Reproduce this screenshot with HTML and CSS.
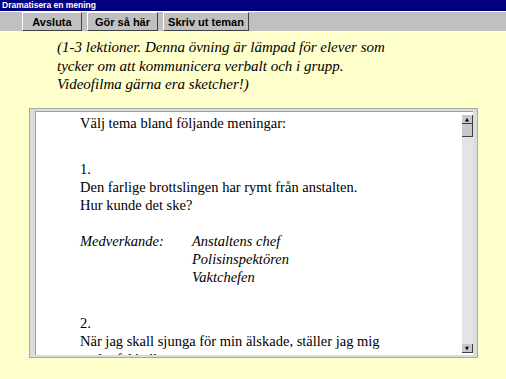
FILE: index.html
```html
<!DOCTYPE html>
<html lang="sv">
<head>
    <meta charset="UTF-8">
    <title>Dramatisera en mening</title>
    <link rel="stylesheet" href="styles.css">
</head>
<body>
    <div class="titlebar">Dramatisera en mening</div>

    <div class="toolbar">
        <button class="tool-btn btn-quit">Avsluta</button>
        <button class="tool-btn btn-help">Gör så här</button>
        <button class="tool-btn btn-print">Skriv ut teman</button>
    </div>

    <p class="intro">(1-3 lektioner. Denna övning är lämpad för elever som<br>
        tycker om att kommunicera verbalt och i grupp.<br>
        Videofilma gärna era sketcher!)</p>

    <div class="viewer">
        <div class="viewer-text">
            <p class="lead">Välj tema bland följande meningar:</p>

            <div class="theme">
                <p>1.<br>
                    Den farlige brottslingen har rymt från anstalten.<br>
                    Hur kunde det ske?</p>
                <div class="cast">
                    <span class="cast-label">Medverkande:</span>
                    <span class="cast-list">Anstaltens chef<br>Polisinspektören<br>Vaktchefen</span>
                </div>
            </div>

            <div class="theme">
                <p>2.<br>
                    När jag skall sjunga för min älskade, ställer jag mig<br>
                    under fel balkong.</p>
            </div>
        </div>
        <div class="scrollbar">
            <div class="scroll-btn">&#9650;</div>
            <div class="scroll-thumb"></div>
            <div class="scroll-track"></div>
            <div class="scroll-btn">&#9660;</div>
        </div>
    </div>
</body>
</html>
```

FILE: styles.css
```css
body {
    margin: 0;
    width: 506px;
    height: 379px;
    overflow: hidden;
    background-color: #ffffcc;
    font-family: "Liberation Serif", "Times New Roman", serif;
}

.titlebar {
    height: 11px;
    background-color: #000080;
    color: white;
    font-family: "Liberation Sans", Arial, sans-serif;
    font-weight: bold;
    font-size: 8.5px;
    line-height: 11px;
    padding-left: 2px;
}

.toolbar {
    display: flex;
    height: 19px;
    padding-left: 22px;
    background-color: #c0c0c0;
    border-top: 1px solid #ffffff;
}

.tool-btn {
    height: 19px;
    margin: 0 5px 0 0;
    padding: 0;
    background-color: #c0c0c0;
    border: 1px solid;
    border-color: #ffffff #404040 #404040 #ffffff;
    font-family: "Liberation Sans", Arial, sans-serif;
    font-weight: bold;
    font-size: 11px;
    color: #000;
}

.btn-quit { width: 60px; }
.btn-help { width: 71px; }
.btn-print { width: 86px; }

.intro {
    margin: 7px 0 0 57px;
    font-style: italic;
    font-size: 15px;
    line-height: 18.5px;
}

.viewer {
    display: flex;
    height: 244px;
    margin: 14px 28px 0 29px;
    background-color: #ffffff;
    border: 3px solid #dcdcdc;
    border-left-width: 6px;
    border-right-width: 5px;
    box-shadow: inset 1px 1px 0 #a0a0a0;
    outline: 1px solid #a8a8a8;
    outline-offset: -1px;
}

.viewer-text {
    flex: 1;
    overflow: hidden;
    padding: 3px 0 0 45px;
    font-size: 14.5px;
    line-height: 18px;
    color: #000;
}

.viewer-text p {
    margin: 0;
}

.theme {
    margin-top: 28px;
}

.cast {
    display: flex;
    margin-top: 18px;
    font-style: italic;
}

.cast-label {
    width: 112px;
}

.scrollbar {
    display: flex;
    flex-direction: column;
    width: 11px;
    margin: 4px 0 2px;
    background-color: #e4e4e4;
}

.scroll-btn {
    height: 8px;
    background-color: #c8c8c8;
    border-right: 1px solid #404040;
    border-bottom: 1px solid #404040;
    font-family: "DejaVu Sans", sans-serif;
    font-size: 5px;
    line-height: 8px;
    text-align: center;
}

.scroll-thumb {
    height: 12px;
    background-color: #c8c8c8;
    border-right: 1px solid #404040;
    border-bottom: 1px solid #404040;
}

.scroll-track {
    flex: 1;
}
```
